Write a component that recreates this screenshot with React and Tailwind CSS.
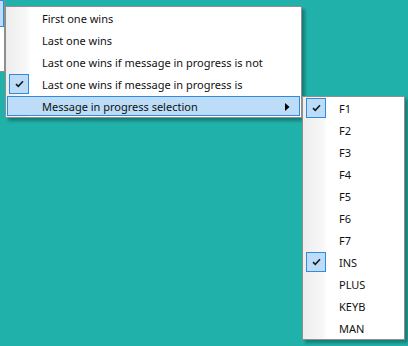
import React from 'react'

const mainItems = [
  { label: 'First one wins' },
  { label: 'Last one wins' },
  { label: 'Last one wins if message in progress is not' },
  { label: 'Last one wins if message in progress is', checked: true },
  { label: 'Message in progress selection', active: true, submenu: true },
]

const subItems = ['F1', 'F2', 'F3', 'F4', 'F5', 'F6', 'F7', 'INS', 'PLUS', 'KEYB', 'MAN']
const subChecked = ['F1', 'INS']

function Check() {
  return (
    <svg width="9" height="8" viewBox="0 0 9 8">
      <path d="M1 4.2 L3.3 6.4 L8 1.2" fill="none" stroke="#1a1a1a" strokeWidth="1.6" />
    </svg>
  )
}

function Arrow() {
  return (
    <svg width="5" height="8" viewBox="0 0 5 8">
      <polygon points="0,0 4.5,4 0,8" fill="#000" />
    </svg>
  )
}

function MenuRow({ label, checked, active, submenu }) {
  return (
    <div className="h-[22px] flex items-center">
      <div
        className={
          'flex-1 h-[20px] mx-[1px] flex items-center border ' +
          (active ? 'bg-[#bcdcf7] border-[#2e8ce0]' : 'border-transparent')
        }
      >
        <div className="w-[26px] h-[20px] pl-[1px] flex items-center">
          {checked && (
            <div className="w-[20px] h-[20px] -my-[1px] flex items-center justify-center bg-[#bcdcf7] border border-[#2e8ce0]">
              <Check />
            </div>
          )}
        </div>
        <span className="flex-1 pl-[8px] pt-[2px] whitespace-nowrap">{label}</span>
        {submenu && (
          <span className="pr-[9px] pt-[1px] flex items-center">
            <Arrow />
          </span>
        )}
      </div>
    </div>
  )
}

export default function App() {
  return (
    <div
      className="relative w-[408px] h-[346px] overflow-hidden bg-[#20b2aa] text-[11px] text-[#111]"
      style={{ fontFamily: "'Noto Sans', 'Open Sans', sans-serif" }}
    >
      {/* parent menu peeking in at the left edge */}
      <div className="absolute left-[-100px] top-[-10px] w-[105px] h-[82px] bg-white border border-[#8f8f8f]">
        <div className="mt-[9px] ml-[60px] h-[27px] bg-[#bcdcf7] border border-[#2e8ce0]" />
      </div>

      {/* main menu */}
      <div className="absolute left-[5px] top-[6px] w-[297px] border border-[#8f8f8f] bg-[linear-gradient(to_right,#ededed_0px,#f7f7f7_20px,#ffffff_25px)] shadow-[3px_3px_3px_rgba(0,0,0,0.3)]">
        {mainItems.map((it) => (
          <MenuRow key={it.label} {...it} />
        ))}
      </div>

      {/* submenu */}
      <div className="absolute left-[302px] top-[96px] w-[103px] border border-[#8f8f8f] bg-[linear-gradient(to_right,#ededed_0px,#f7f7f7_20px,#ffffff_25px)] shadow-[3px_3px_3px_rgba(0,0,0,0.3)]">
        {subItems.map((s) => (
          <MenuRow key={s} label={s} checked={subChecked.includes(s)} />
        ))}
      </div>
    </div>
  )
}
